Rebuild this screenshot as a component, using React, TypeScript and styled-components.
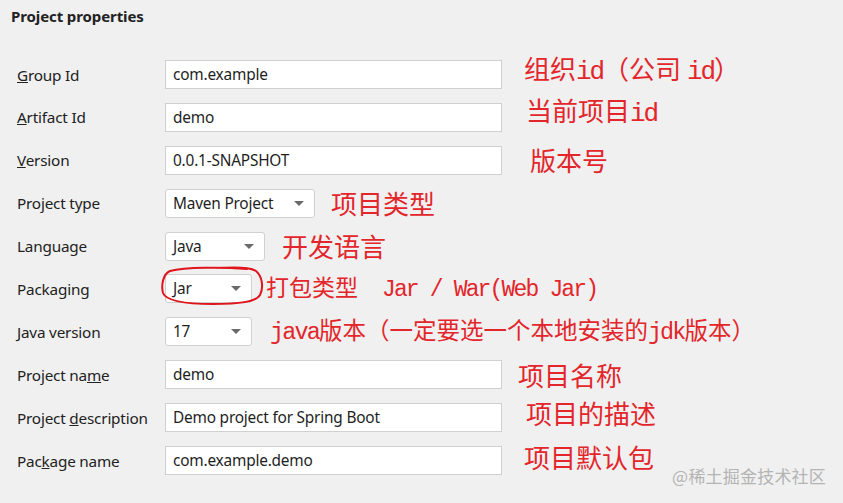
import styled, { createGlobalStyle } from "styled-components"

const GlobalStyle = createGlobalStyle`
  html, body {
    margin: 0;
    padding: 0;
    background: #f0f0f0;
  }
  body {
    font-family: "Noto Sans", "Open Sans", sans-serif;
  }
`

const Page = styled.div`
  position: relative;
  width: 843px;
  height: 503px;
  overflow: hidden;
  background: #f0f0f0;
  color: #1e1e1e;
  box-sizing: border-box;
  padding: 6px 0 0 11px;
`

const Title = styled.div`
  font-size: 15px;
  font-weight: 700;
  color: #222;
  height: 20px;
  line-height: 20px;
  letter-spacing: -0.1px;
`

const Form = styled.div`
  display: flex;
  flex-direction: column;
  gap: 13.9px;
  margin-top: 34px;
  padding-left: 6px;
`

const Row = styled.div`
  display: flex;
  align-items: center;
  height: 29px;
`

const Label = styled.div`
  width: 148px;
  flex-shrink: 0;
  font-size: 15.3px;
  color: #222;
  white-space: nowrap;
  letter-spacing: -0.2px;
`

const TextField = styled.div`
  width: 337px;
  height: 29px;
  box-sizing: border-box;
  background: #fff;
  border: 1px solid #d0d0d0;
  padding: 0 7px;
  display: flex;
  align-items: center;
  font-size: 15.4px;
  color: #1e1e1e;
  letter-spacing: -0.2px;
  flex-shrink: 0;
`

const SelectWrap = styled.div`
  position: relative;
  flex-shrink: 0;
`

const Select = styled.div<{ $w: number }>`
  width: ${(p) => p.$w}px;
  height: 29px;
  box-sizing: border-box;
  background: #fff;
  border: 1px solid #d0d0d0;
  border-radius: 3px;
  padding: 0 10px 0 7px;
  display: flex;
  align-items: center;
  justify-content: space-between;
  font-size: 15.4px;
  color: #1e1e1e;
  letter-spacing: -0.2px;
`

const Caret = styled.span`
  width: 0;
  height: 0;
  border-left: 5px solid transparent;
  border-right: 5px solid transparent;
  border-top: 5px solid #6a6a6a;
`

// hand-drawn red loop around the packaging select
const Loop = styled.svg`
  position: absolute;
  left: -4px;
  top: -8px;
  overflow: visible;
  pointer-events: none;
`

const Note = styled.div<{ $gap: number; $up?: number; $size?: number }>`
  margin-left: ${(p) => p.$gap}px;
  margin-bottom: ${(p) => (p.$up ?? 0) * 2}px;
  font-family: "Noto Sans CJK SC", "Liberation Serif", serif;
  font-size: ${(p) => p.$size ?? 26}px;
  color: #e3262b;
  white-space: pre;
  line-height: 1;
`

const Latin = styled.span`
  font-family: "Liberation Mono", monospace;
  letter-spacing: -0.08em;
`

const Watermark = styled.div`
  position: absolute;
  right: 17px;
  bottom: 15px;
  font-family: "Noto Sans CJK SC", sans-serif;
  font-size: 17px;
  color: #b4b4b4;
  letter-spacing: 0.2px;
`

const App = () => {
  return (
    <Page>
      <GlobalStyle />
      <Title>Project properties</Title>
      <Form>
        <Row>
          <Label><u>G</u>roup Id</Label>
          <TextField>com.example</TextField>
          <Note $gap={22} $up={5}>组织<Latin>id</Latin>（公司 <Latin>id</Latin>）</Note>
        </Row>
        <Row>
          <Label><u>A</u>rtifact Id</Label>
          <TextField>demo</TextField>
          <Note $gap={24} $up={5}>当前项目<Latin>id</Latin></Note>
        </Row>
        <Row>
          <Label><u>V</u>ersion</Label>
          <TextField>0.0.1-SNAPSHOT</TextField>
          <Note $gap={28}>版本号</Note>
        </Row>
        <Row>
          <Label>Project type</Label>
          <SelectWrap>
            <Select $w={150}>Maven Project<Caret /></Select>
          </SelectWrap>
          <Note $gap={16}>项目类型</Note>
        </Row>
        <Row>
          <Label>Language</Label>
          <SelectWrap>
            <Select $w={100}>Java<Caret /></Select>
          </SelectWrap>
          <Note $gap={17}>开发语言</Note>
        </Row>
        <Row>
          <Label>Packaging</Label>
          <SelectWrap>
            <Select $w={87}>Jar<Caret /></Select>
            <Loop width="104" height="39" viewBox="0 0 104 39">
              <path
                d="M86 3 C62 1 24 1 9 5 C2 8 0 19 2 27 C5 35 24 38 52 38 C78 38 95 36 99 29 C103 21 101 10 95 5 C89 1 74 1 58 2"
                fill="none"
                stroke="#e0141c"
                strokeWidth="2"
                strokeLinecap="round"
              />
            </Loop>
          </SelectWrap>
          <Note $gap={14} $size={23}>打包类型<Latin>  Jar / War(Web Jar)</Latin></Note>
        </Row>
        <Row>
          <Label>Java version</Label>
          <SelectWrap>
            <Select $w={87}>17<Caret /></Select>
          </SelectWrap>
          <Note $gap={18} $up={1} $size={23.5}><Latin>java</Latin>版本（一定要选一个本地安装的<Latin>jdk</Latin>版本）</Note>
        </Row>
        <Row>
          <Label>Project na<u>m</u>e</Label>
          <TextField>demo</TextField>
          <Note $gap={16}>项目名称</Note>
        </Row>
        <Row>
          <Label>Project <u>d</u>escription</Label>
          <TextField>Demo project for Spring Boot</TextField>
          <Note $gap={24} $up={5}>项目的描述</Note>
        </Row>
        <Row>
          <Label>Pac<u>k</u>age name</Label>
          <TextField>com.example.demo</TextField>
          <Note $gap={22} $up={4}>项目默认包</Note>
        </Row>
      </Form>
      <Watermark>@稀土掘金技术社区</Watermark>
    </Page>
  )
}

export default App
